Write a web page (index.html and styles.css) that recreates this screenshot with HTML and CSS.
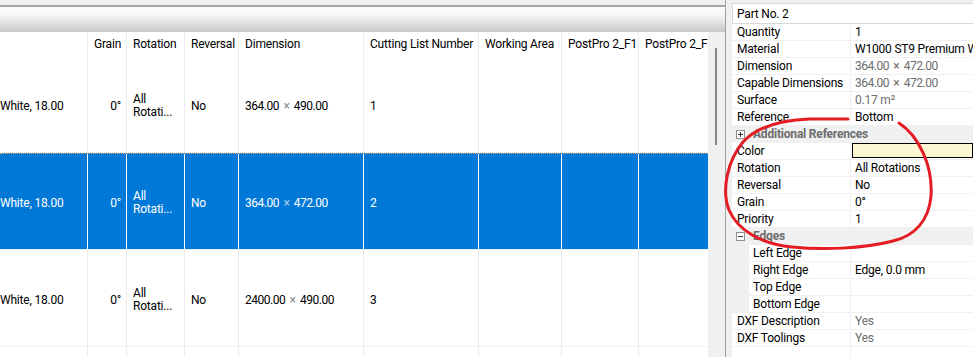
FILE: index.html
```html
<!DOCTYPE html>
<html lang="en">

<head>
    <meta charset="UTF-8">
    <meta name="viewport" content="width=device-width, initial-scale=1.0">
    <title>Parts</title>
    <link rel="stylesheet" href="styles.css">
</head>

<body>

    <div class="window">
        <div class="list-pane">
            <div class="toolbar"></div>
            <div class="band"></div>

            <div class="list-body">
                <div class="grid">
                    <div class="row head">
                        <div class="cell"></div>
                        <div class="cell">Grain</div>
                        <div class="cell">Rotation</div>
                        <div class="cell">Reversal</div>
                        <div class="cell">Dimension</div>
                        <div class="cell">Cutting List Number</div>
                        <div class="cell">Working Area</div>
                        <div class="cell">PostPro 2_F1</div>
                        <div class="cell">PostPro 2_F2</div>
                    </div>

                    <div class="row">
                        <div class="cell first">White, 18.00</div>
                        <div class="cell right">0°</div>
                        <div class="cell"><span class="wrap">All<br>Rotati...</span></div>
                        <div class="cell">No</div>
                        <div class="cell"><span class="dim">364.00 <span class="times">×</span> 490.00</span></div>
                        <div class="cell">1</div>
                        <div class="cell"></div>
                        <div class="cell"></div>
                        <div class="cell"></div>
                    </div>

                    <div class="row selected">
                        <div class="cell first">White, 18.00</div>
                        <div class="cell right">0°</div>
                        <div class="cell"><span class="wrap">All<br>Rotati...</span></div>
                        <div class="cell">No</div>
                        <div class="cell"><span class="dim">364.00 <span class="times">×</span> 472.00</span></div>
                        <div class="cell">2</div>
                        <div class="cell"></div>
                        <div class="cell"></div>
                        <div class="cell"></div>
                    </div>

                    <div class="row">
                        <div class="cell first">White, 18.00</div>
                        <div class="cell right">0°</div>
                        <div class="cell"><span class="wrap">All<br>Rotati...</span></div>
                        <div class="cell">No</div>
                        <div class="cell"><span class="dim">2400.00 <span class="times">×</span> 490.00</span></div>
                        <div class="cell">3</div>
                        <div class="cell"></div>
                        <div class="cell"></div>
                        <div class="cell"></div>
                    </div>

                    <div class="row">
                        <div class="cell first"></div>
                        <div class="cell"></div>
                        <div class="cell"></div>
                        <div class="cell"></div>
                        <div class="cell"></div>
                        <div class="cell"></div>
                        <div class="cell"></div>
                        <div class="cell"></div>
                        <div class="cell"></div>
                    </div>
                </div>

                <div class="vscroll">
                    <div class="thumb"></div>
                </div>
            </div>
        </div>

        <div class="prop-pane">
            <div class="part-box">Part No. 2</div>

            <div class="props">
                <div class="prop"><div class="pname">Quantity</div><div class="pval">1</div></div>
                <div class="prop"><div class="pname">Material</div><div class="pval">W1000 ST9 Premium White, 18.00</div></div>
                <div class="prop"><div class="pname">Dimension</div><div class="pval muted"><span class="dim">364.00 × 472.00</span></div></div>
                <div class="prop"><div class="pname">Capable Dimensions</div><div class="pval muted"><span class="dim">364.00 × 472.00</span></div></div>
                <div class="prop"><div class="pname">Surface</div><div class="pval muted">0.17 m²</div></div>
                <div class="prop"><div class="pname">Reference</div><div class="pval">Bottom</div></div>

                <div class="prop cat">
                    <svg class="toggle" width="9" height="9" viewBox="0 0 9 9">
                        <rect x="0.5" y="0.5" width="8" height="8" fill="#fff" stroke="#8e8f8f"/>
                        <path d="M2 4.5h5M4.5 2v5" stroke="#333" stroke-width="1"/>
                    </svg>
                    <span>Additional References</span>
                </div>

                <div class="prop"><div class="pname">Color</div><div class="pval"><div class="swatch"></div></div></div>
                <div class="prop"><div class="pname">Rotation</div><div class="pval">All Rotations</div></div>
                <div class="prop"><div class="pname">Reversal</div><div class="pval">No</div></div>
                <div class="prop"><div class="pname">Grain</div><div class="pval">0°</div></div>
                <div class="prop"><div class="pname">Priority</div><div class="pval">1</div></div>

                <div class="prop cat">
                    <svg class="toggle" width="9" height="9" viewBox="0 0 9 9">
                        <rect x="0.5" y="0.5" width="8" height="8" fill="#fff" stroke="#8e8f8f"/>
                        <path d="M2 4.5h5" stroke="#333" stroke-width="1"/>
                    </svg>
                    <span>Edges</span>
                </div>

                <div class="prop sub"><div class="pname">Left Edge</div><div class="pval"></div></div>
                <div class="prop sub"><div class="pname">Right Edge</div><div class="pval">Edge, 0.0 mm</div></div>
                <div class="prop sub"><div class="pname">Top Edge</div><div class="pval"></div></div>
                <div class="prop sub"><div class="pname">Bottom Edge</div><div class="pval"></div></div>
                <div class="prop"><div class="pname">DXF Description</div><div class="pval muted">Yes</div></div>
                <div class="prop"><div class="pname">DXF Toolings</div><div class="pval muted">Yes</div></div>
                <div class="prop"><div class="pname"></div><div class="pval"></div></div>
            </div>
        </div>

        <!-- hand drawn marker around the reference properties -->
        <svg class="annotation" width="973" height="357" viewBox="0 0 973 357">
            <path d="M899 123 C919 136 933 166 931 196 C929 220 915 236 893 241 C862 249 822 250 792 247 C762 244 738 231 729 210 C721 189 728 160 743 142 C757 127 780 120 810 119 L848 119"
                fill="none" stroke="#e31b23" stroke-width="3" stroke-linecap="round"/>
        </svg>
    </div>

</body>

</html>
```

FILE: styles.css
```css
body {
    margin: 0;
    font-family: Roboto, sans-serif;
    font-size: 12px;
    letter-spacing: -0.2px;
    color: #000;
    background: #f0f0f0;
}

.window {
    position: relative;
    display: flex;
    width: 973px;
    height: 357px;
    overflow: hidden;
}

/* left: parts list */

.list-pane {
    width: 725px;
    flex: none;
    display: flex;
    flex-direction: column;
    background: #fff;
}

.toolbar {
    height: 5px;
    background: #f0f0f0;
    border-bottom: 2px solid #a6a6a6;
}

.band {
    height: 25px;
    background: linear-gradient(#fdfdfd, #f5f5f5 35%, #c8c8c8);
}

.list-body {
    flex: 1;
    display: flex;
    min-height: 0;
}

.grid {
    width: 708px;
    flex: none;
    overflow: hidden;
}

.row {
    display: grid;
    grid-template-columns: 88px 39px 58px 54px 125px 115px 83px 77px 100px;
    height: 97px;
    box-sizing: border-box;
    border-bottom: 1px solid #f0f0f0;
}

.row.head {
    height: 24px;
    border-bottom: none;
}

.cell {
    display: flex;
    align-items: center;
    padding: 0 6px;
    border-right: 1px solid #ececec;
    white-space: nowrap;
    overflow: hidden;
}

.row:not(.head) .cell {
    padding-top: 3px;
}

.cell.first {
    padding-left: 0;
}

.cell.right {
    justify-content: flex-end;
    padding-right: 5px;
}

.wrap {
    line-height: 13px;
}

.dim {
    letter-spacing: -0.5px;
    word-spacing: 2px;
}

.times {
    color: #8a8a8a;
}

.row.selected {
    background: #0078d7;
    color: #fff;
    border-top: 1px dotted #e6a86a;
}

.row.selected .cell {
    border-right-color: #fff;
}

.row.selected .times {
    color: #a9cdf0;
}

.vscroll {
    width: 17px;
    background: #f0f0f0;
    padding: 16px 0 0 7px;
    box-sizing: border-box;
}

.thumb {
    width: 2px;
    height: 97px;
    background: #868686;
}

/* right: property grid */

.prop-pane {
    flex: 1;
    min-width: 0;
    border-left: 1px solid #a0a0a0;
    padding: 3px 0 0 6px;
}

.part-box {
    height: 21px;
    box-sizing: border-box;
    border: 1px solid #d9d9d9;
    border-right: none;
    background: #fff;
    padding: 0 4px;
    display: flex;
    align-items: center;
}

.props {
    background: #fff;
}

.prop {
    display: grid;
    grid-template-columns: 119px 1fr;
    height: 17px;
    box-sizing: border-box;
    border-bottom: 1px solid #f0f0f0;
    line-height: 16px;
}

.pname {
    padding-left: 5px;
    border-right: 1px solid #f0f0f0;
    white-space: nowrap;
    overflow: hidden;
}

.pval {
    padding-left: 4px;
    white-space: nowrap;
    overflow: hidden;
}

.muted {
    color: #6d6d6d;
}

.prop.sub .pname {
    border-left: 17px solid #f0f0f0;
    padding-left: 4px;
}

.prop.cat {
    display: flex;
    align-items: center;
    background: #f0f0f0;
    color: #6d6d6d;
    font-weight: 700;
}

.toggle {
    margin: 0 8px 0 4px;
}

.swatch {
    height: 15px;
    margin: 0 0 0 -3px;
    box-sizing: border-box;
    border: 1px solid #000;
    background: #fdf6d2;
}

.annotation {
    position: absolute;
    left: 0;
    top: 0;
    pointer-events: none;
}
```
